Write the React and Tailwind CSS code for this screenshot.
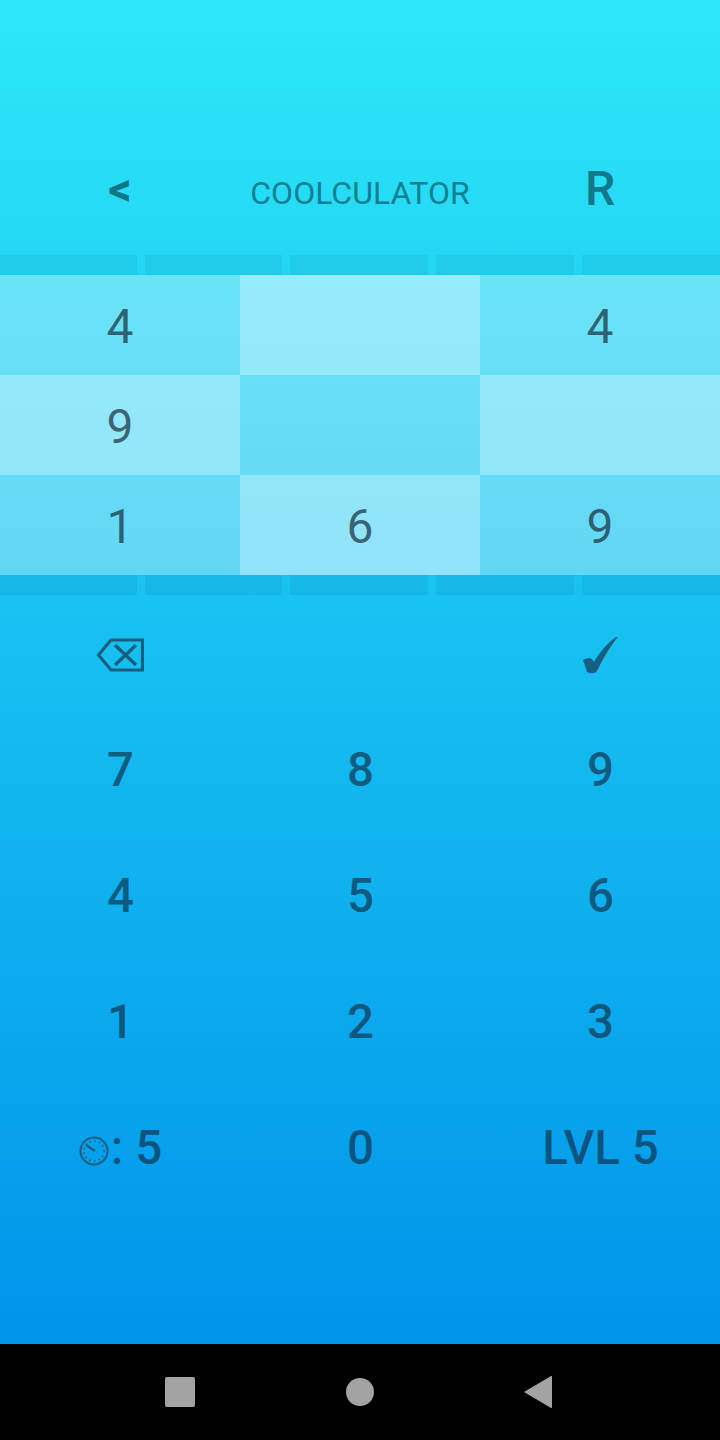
const cells = [
  ["4", "m"], ["", "l"], ["4", "m"],
  ["9", "l"], ["", "m"], ["", "l"],
  ["1", "m"], ["6", "l"], ["9", "m"],
];

function Stripe() {
  return (
    <div className="grid h-5 grid-cols-[137px_137px_138px_138px_138px] gap-2">
      {[0, 1, 2, 3, 4].map((i) => (
        <div key={i} className="bg-[rgba(0,60,110,0.08)]" />
      ))}
    </div>
  );
}

function Key({ children }) {
  return (
    <div className="flex h-[126px] w-[240px] items-center justify-center pl-[1px] pt-[1px] text-[47.5px] font-medium leading-none text-[rgba(15,45,70,0.66)]">
      {children}
    </div>
  );
}

export default function App() {
  return (
    <div className="flex h-[1440px] w-[720px] flex-col overflow-hidden font-['Roboto',sans-serif]">
      <div className="flex h-[1344px] flex-col bg-linear-to-b/srgb from-[#2ce8f7] to-[#0094ea]">
        <div className="flex h-[255px] items-end pb-[31px]">
          <div className="flex h-[70px] w-[240px] items-center justify-center text-[46px] font-bold leading-none text-[#0f7688]">&lt;</div>
          <div className="flex h-[70px] w-[240px] items-center justify-center pt-2 text-[32px] leading-none text-[#117f93]">COOLCULATOR</div>
          <div className="flex h-[70px] w-[240px] items-center justify-center text-[48px] font-medium leading-none text-[#11788c]">R</div>
        </div>
        <Stripe />
        <div className="grid grid-cols-3">
          {cells.map(([t, k], i) => (
            <div
              key={i}
              className={
                "flex h-[100px] items-center justify-center pt-1 text-[48px] leading-none text-[rgba(25,50,65,0.72)] " +
                (k === "l" ? "bg-[rgba(255,255,255,0.52)]" : "bg-[rgba(255,255,255,0.32)]")
              }
            >
              {t}
            </div>
          ))}
        </div>
        <Stripe />
        <div className="flex h-[112px]">
          <div className="flex h-[120px] w-[240px] items-center justify-center">
            <svg width="48" height="34" viewBox="0 0 48 34" fill="none" stroke="#155f80" strokeWidth="3.2">
              <path d="M46.5 2H15L2.5 17 15 32h31.5z" />
              <path d="M19 7l21 20M40 7L19 27" strokeWidth="3.4" />
            </svg>
          </div>
          <div className="w-[240px]" />
          <div className="flex h-[120px] w-[240px] items-center justify-center">
            <svg width="35" height="38" viewBox="0 0 35 38" fill="#155f80">
              <path d="M0 24c2-1 4-2 6-2 2 0 4 2 5 4C16 17 24 7 33 1l2 0C28 9 21 21 15 33c-1 2-2 4-4 4-2 1-5 0-7-1C3 32 1 27 0 24z" />
            </svg>
          </div>
        </div>
        {[["7", "8", "9"], ["4", "5", "6"], ["1", "2", "3"]].map((row) => (
          <div key={row[0]} className="flex">
            {row.map((d) => (
              <Key key={d}>{d}</Key>
            ))}
          </div>
        ))}
        <div className="flex">
          <Key>
            <span className="flex items-center">
              <svg width="30" height="30" viewBox="0 0 30 30" fill="none" stroke="#155f80" className="mr-[2px] mt-[4px]">
                <circle cx="15" cy="15" r="13.5" strokeWidth="2" />
                <circle cx="15" cy="15" r="10" strokeWidth="1.6" strokeDasharray="1.5 3.2" />
                <path d="M7 9l9 6" strokeWidth="2.4" />
              </svg>
              <span>: 5</span>
            </span>
          </Key>
          <Key>0</Key>
          <Key>LVL 5</Key>
        </div>
      </div>
      <div className="flex h-[96px] items-center justify-center bg-black">
        <div className="flex w-[180px] justify-center"><div className="h-[30px] w-[30px] rounded-[2px] bg-[#a3a3a3]" /></div>
        <div className="flex w-[180px] justify-center"><div className="h-7 w-7 rounded-full bg-[#a3a3a3]" /></div>
        <div className="flex w-[180px] justify-center pr-1">
          <svg width="30" height="34" viewBox="0 0 30 34" fill="#a3a3a3">
            <path d="M28 1c1 0 1 0 1 1v30c0 1-1 1-1 1L1 17z" />
          </svg>
        </div>
      </div>
    </div>
  );
}
